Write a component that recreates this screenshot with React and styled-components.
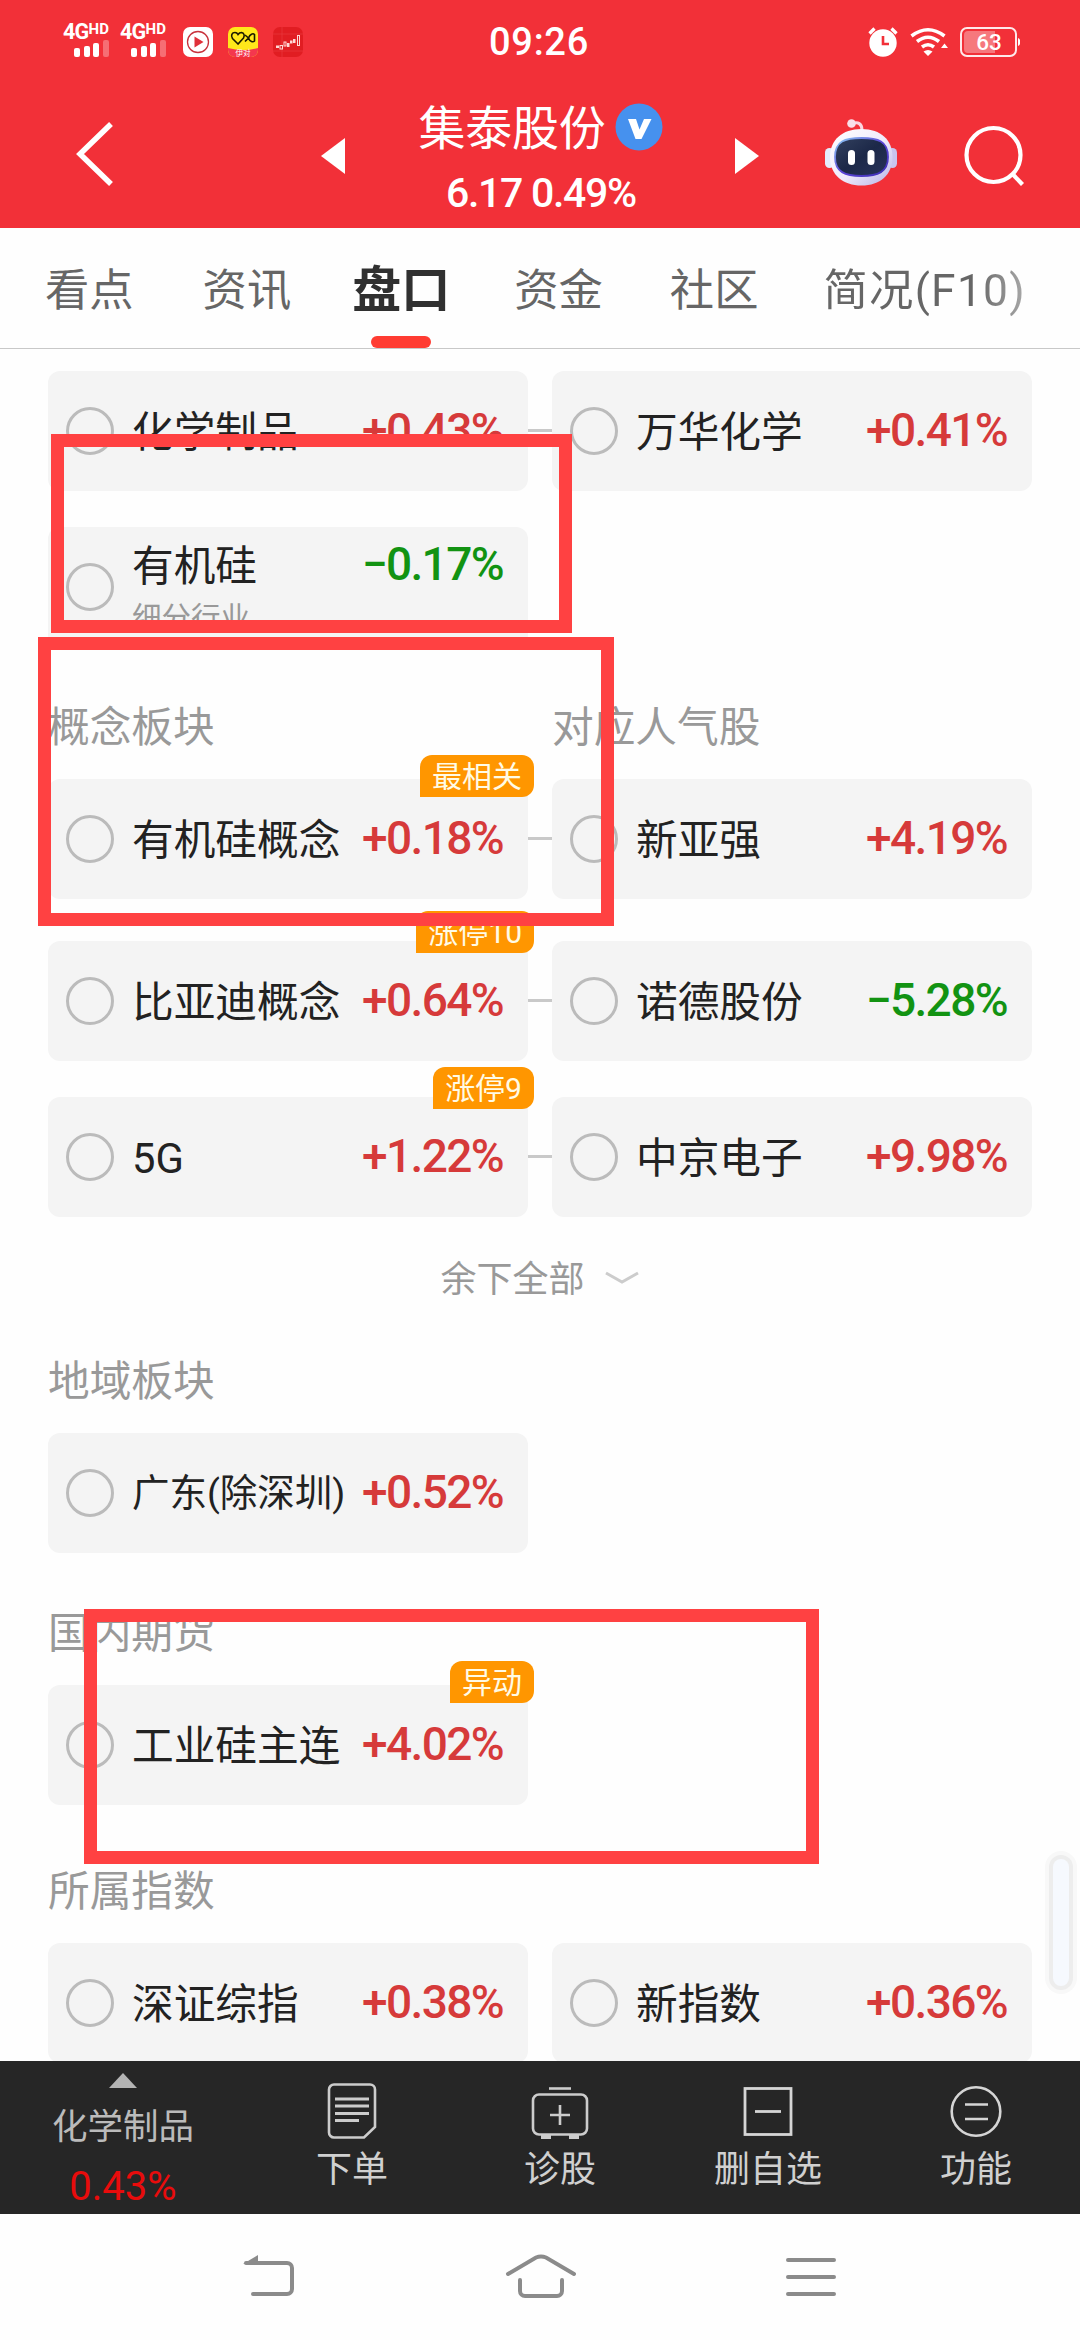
import React, { useState } from 'react'
import styled, { createGlobalStyle } from 'styled-components'

const GlobalStyle = createGlobalStyle`
* { box-sizing: border-box; }
body {
  margin: 0;
  background: #fefefe;
  font-family: Roboto, "Noto Sans CJK SC", sans-serif;
}
svg { display: block; flex: none; }
`

const Screen = styled.div`
position: relative;
display: flex;
flex-direction: column;
width: 1080px;
height: 2340px;
overflow: hidden;
background: #fefefe;
`

const Header = styled.header`
height: 228px;
flex: none;
background: #f23038;
color: #fff;
`

const StatusBar = styled.div`
display: flex;
align-items: center;
height: 84px;
padding: 0 59px 0 63px;
`

const StatusSide = styled.div`
display: flex;
align-items: center;
flex: 1;
gap: ${p => p.gap}px;
justify-content: ${p => p.end ? "flex-end" : "flex-start"};
`

const Clock = styled.div`
margin-left: -6px;
font-size: 38px;
font-weight: 500;
line-height: 44px;
letter-spacing: 0.7px;
`

const SignalBox = styled.div`
display: flex;
flex-direction: column;
align-items: flex-end;
width: 47px;
height: 34px;
margin-top: -4px;
margin-right: ${p => p.last ? 6 : 0}px;
`

const SignalText = styled.div`
display: flex;
align-items: flex-start;
width: 47px;
height: 17px;
font-size: 21.5px;
font-weight: 700;
line-height: 17px;
letter-spacing: -0.8px;
span {
  font-size: 15px;
  line-height: 12px;
  letter-spacing: 0.2px;
}
`

const TitleBar = styled.div`
display: flex;
align-items: center;
height: 144px;
padding: 0 54px 0 75px;
`

const TitleSide = styled.div`
display: flex;
align-items: center;
height: 144px;
padding-bottom: ${p => p.lift || 0}px;
margin-left: ${p => p.left || 0}px;
`

const StockTitle = styled.div`
display: flex;
flex-direction: column;
align-items: center;
width: 390px;
padding: 6px 0 0 2px;
`

const StockName = styled.div`
display: flex;
align-items: center;
height: 58px;
gap: 10px;
font-size: 47px;
line-height: 58px;
letter-spacing: -0.3px;
svg { margin-bottom: 4px; }
`

const StockPrice = styled.div`
height: 60px;
font-size: 41px;
font-weight: 500;
line-height: 71px;
letter-spacing: -1.3px;
`

const TabBar = styled.nav`
display: flex;
height: 121px;
flex: none;
padding-left: 45px;
gap: 66px;
border-bottom: 1px solid #c8c8c8;
background: #fefefe;
`

const Tab = styled.div`
display: flex;
flex-direction: column;
align-items: center;
justify-content: space-between;
padding-top: 30px;
white-space: nowrap;
color: ${p => p.active ? "#303030" : "#666"};
font-size: ${p => p.active ? 49 : 44.3}px;
font-weight: ${p => p.active ? 700 : 400};
line-height: 66px;
margin-left: ${p => p.shift || 0}px;
span {
  ${p => p.fade ? "letter-spacing: 1.3px; background: linear-gradient(90deg, #666 75%, #aaa 100%); -webkit-background-clip: text; color: transparent;" : ""}
}
&::after {
  content: "";
  width: 60px;
  height: 12px;
  border-radius: 6px;
  background: ${p => p.active ? "#ff3c32" : "transparent"};
}
`

const Content = styled.main`
flex: none;
height: 1712px;
overflow: hidden;
padding: 22px 48px 0;
`

const SectionTitle = styled.div`
display: flex;
margin-top: ${p => p.top || 54}px;
margin-bottom: 28px;
color: #999;
font-size: 41.7px;
line-height: 54px;
height: 50px;
white-space: nowrap;
span {
  flex: none;
  width: 504px;
}
`

const Row = styled.div`
display: flex;
align-items: center;
margin-top: ${p => p.top || 0}px;
`

const Link = styled.div`
width: 24px;
height: 3px;
background: #c9c9c9;
margin-top: -1px;
visibility: ${p => p.off ? "hidden" : "visible"};
`

const Card = styled.div`
position: relative;
display: flex;
align-items: center;
width: 480px;
height: 120px;
padding: 0 25px 0 18px;
border-radius: 12px;
background: #f4f4f4;
`

const Circle = styled.div`
width: 48px;
height: 48px;
flex: none;
border: 3px solid #bbb;
border-radius: 50%;
background: ${p => p.checked ? "#f23038" : "transparent"};
`

const CardBody = styled.div`
flex: 1;
margin-left: 18px;
`

const CardLine = styled.div`
display: flex;
align-items: center;
justify-content: space-between;
height: 56px;
white-space: nowrap;
`

const Name = styled.div`
color: #222;
font-size: ${p => p.small ? 37.5 : 41.7}px;
height: 56px;
line-height: ${p => p.small ? 56 : 60}px;
`

const Percent = styled.div`
color: ${p => p.down ? "#129312" : "#d63a3a"};
font-size: 46px;
font-weight: 500;
line-height: 52px;
letter-spacing: -1.6px;
margin-bottom: 3px;
`

const SubLabel = styled.div`
height: 44px;
color: #999;
font-size: 29.5px;
line-height: 50px;
`

const Badge = styled.div`
position: absolute;
right: -6px;
top: ${p => p.top}px;
height: 42px;
padding: 0 12px;
border-radius: 12px 12px 12px 0;
background: #ff9600;
color: #fffbe6;
font-size: 30px;
line-height: 43px;
`

const More = styled.div`
display: flex;
align-items: center;
justify-content: center;
gap: 19px;
height: 84px;
padding-top: 38px;
color: #999;
font-size: 36px;
line-height: 46px;
span {
  padding-top: 3px;
}
`

const ToolBar = styled.footer`
display: flex;
flex: none;
height: 153px;
background: #262626;
color: #d0d0d0;
`

const IndexItem = styled.div`
display: flex;
flex-direction: column;
align-items: center;
width: 246px;
padding-top: 12px;
margin-right: 2px;
color: #bbb;
font-size: 35.5px;
line-height: 50px;
svg { margin-bottom: 14px; }
strong {
  margin-top: 8px;
  color: #e80c0c;
  font-weight: 400;
  font-size: 40px;
  line-height: 54px;
}
`

const Tool = styled.div`
display: flex;
flex-direction: column;
align-items: center;
width: 208px;
padding-top: 20px;
font-size: 36px;
line-height: 50px;
svg { margin-bottom: 6px; }
`

const NavBar = styled.div`
display: flex;
flex: none;
height: 126px;
padding: 38px 240px 0;
justify-content: space-between;
`

const Marker = styled.div`
position: absolute;
left: ${p => p.x}px;
top: ${p => p.y}px;
width: ${p => p.w}px;
height: ${p => p.h}px;
border: 13.5px solid #ff4142;
`

const ScrollThumb = styled.div`
position: absolute;
left: 1053px;
top: 1859px;
width: 16px;
height: 127px;
border-radius: 8px;
background: #f6f9fe;
box-shadow: 0 0 0 4px #ededed, 0 0 0 8px #f8f8f8;
`

function Signal({ last }) {
  return (
    <SignalBox last={last}>
      <SignalText>4G<span>HD</span></SignalText>
      <svg width="36" height="17" viewBox="0 0 36 17" fill="#fff">
        <rect x="0" y="8" width="6" height="9" rx="2" />
        <rect x="10" y="6" width="6" height="11" rx="2" />
        <rect x="19" y="3" width="6" height="14" rx="2" />
        <rect x="29" y="0" width="6" height="17" rx="2" opacity=".3" />
      </svg>
    </SignalBox>
  )
}

function PlayIcon() {
  return (
    <svg width="30" height="30" viewBox="0 0 30 30">
      <rect width="30" height="30" rx="7" fill="#fff" />
      <circle cx="15" cy="15" r="10.5" fill="none" stroke="#c8323c" strokeWidth="1.3" />
      <path d="M11.5 9.5 L20.5 15 L11.5 20.5 Z" fill="#e0303a" />
    </svg>
  )
}

function YiduiIcon() {
  return (
    <svg width="30" height="30" viewBox="0 0 30 30">
      <rect width="30" height="30" rx="7" fill="#ffe81a" />
      <path d="M0 21 Q15 25 30 21 V23 a7 7 0 0 1 -7 7 H7 a7 7 0 0 1 -7 -7 Z" fill="#f4374e" />
      <path d="M10 17 L4.5 11.5 C2.5 8.5 4 5.5 7 5.5 C8.5 5.5 9.5 6.5 10 7.5 C11 6 12 5.5 13.5 5.5 C16 6 17 8.5 15.5 11 Z" fill="none" stroke="#1a1a00" strokeWidth="1.6" />
      <path d="M17 8 L20.500 11 L17 14.500 M20.500 11 C22 7 25 6 26.500 7.500 V14 C25 15.500 22 15 20.500 11" fill="none" stroke="#1a1a00" strokeWidth="1.6" />
      <text x="15" y="28.500" fontSize="7.500" textAnchor="middle" fill="#fff">伊对</text>
    </svg>
  )
}

function KLineIcon() {
  return (
    <svg width="30" height="30" viewBox="0 0 30 30">
      <rect width="30" height="30" rx="7" fill="#e11d22" />
      <path d="M9 0 V30 M0 7 H30 M0 24 H30" stroke="#ea3a3c" strokeWidth=".7" />
      <g stroke="#ffd9d6" strokeWidth="1" fill="none">
        <rect x="7" y="18.500" width="2.500" height="3.500" />
        <rect x="11" y="15" width="2" height="4" />
        <rect x="24.500" y="8.500" width="2" height="10" />
      </g>
      <path d="M3 18.500 h3 v2.500 h-3 Z M14 16 h2.500 v4 h-2.500 Z M17 13.500 h2.500 v3 h-2.500 Z M20 12 h2.500 v4 h-2.500 Z" fill="#ffd9d6" />
    </svg>
  )
}

function AlarmIcon() {
  return (
    <svg width="30" height="30" viewBox="0 0 30 30">
      <circle cx="15" cy="16" r="13.700" fill="#fff" />
      <path d="M1.500 6.500 L6.500 1.500 M28.500 6.500 L23.500 1.500" stroke="#fff" strokeWidth="3.200" />
      <path d="M15 9 V17 H21" fill="none" stroke="#f23038" strokeWidth="2.600" />
    </svg>
  )
}

function WifiIcon() {
  return (
    <svg width="38" height="30" viewBox="0 0 38 30">
      <g fill="none" stroke="#fff" strokeWidth="3.600">
        <path d="M1.500 9 Q18 -3.500 34.500 9" />
        <path d="M7 14.500 Q18 6 29 14.500" />
        <path d="M12 20 Q18 15.500 24 20" />
      </g>
      <path d="M13.500 24.500 Q18 21.500 22.500 24.500 L18 29 Z M31 21 L34.500 16.500 L38 21 Z" fill="#fff" />
    </svg>
  )
}

function BatteryIcon() {
  return (
    <svg width="61" height="30" viewBox="0 0 61 30">
      <rect x="1" y="1" width="55" height="28" rx="6" fill="none" stroke="#fff" strokeOpacity=".9" strokeWidth="2" />
      <path d="M8 4 H35 V26 H8 a4 4 0 0 1 -4 -4 V8 a4 4 0 0 1 4 -4 Z" fill="#fff" opacity=".35" />
      <path d="M58 11 a3 3 0 0 1 2 2 v4 a3 3 0 0 1 -2 2 Z" fill="#fff" />
      <text x="29" y="23" fontSize="22.500" fontWeight="500" textAnchor="middle" fill="#fff">63</text>
    </svg>
  )
}

function RobotIcon() {
  return (
    <svg width="72" height="68" viewBox="0 0 72 68">
      <defs>
        <linearGradient id="shell" x1="0" y1="0" x2="1" y2="1">
          <stop offset="0" stopColor="#fff" />
          <stop offset=".55" stopColor="#efeafb" />
          <stop offset="1" stopColor="#b5b2e6" />
        </linearGradient>
        <linearGradient id="face" x1="0" y1="0" x2="1" y2="1">
          <stop offset="0" stopColor="#33415f" />
          <stop offset=".5" stopColor="#1c2848" />
          <stop offset="1" stopColor="#28325a" />
        </linearGradient>
        <linearGradient id="rim" x1="0" y1="0" x2="1" y2="1">
          <stop offset="0" stopColor="#8fd0f4" />
          <stop offset=".5" stopColor="#5c46d8" />
          <stop offset="1" stopColor="#3b2cb0" />
        </linearGradient>
      </defs>
      <path d="M27 5 C33 2 37 5 37 11" fill="none" stroke="#fbd5e0" strokeWidth="3" />
      <circle cx="26.500" cy="4.500" r="4.300" fill="#f9dfe9" />
      <rect x="0" y="29" width="9" height="20" rx="4.500" fill="#e4ecfc" />
      <rect x="63" y="29" width="9" height="20" rx="4.500" fill="#c9c4ee" />
      <path d="M36.500 10 C56 10 67.500 21 67.500 38 C67.500 56 55 66.500 36.500 66.500 C18 66.500 5 56 5 38 C5 21 17 10 36.500 10 Z" fill="url(#shell)" />
      <path d="M36.500 19 C53 19 63 22 63 38 C63 53 53 57 36.500 57 C20 57 10 53 10 38 C10 22 20 19 36.500 19 Z" fill="url(#face)" stroke="url(#rim)" strokeWidth="1.800" />
      <rect x="23" y="31" width="7" height="15" rx="3.500" fill="#fff" />
      <rect x="42.500" y="31" width="7" height="15" rx="3.500" fill="#fff" />
    </svg>
  )
}

const BackIcon = () => (
  <svg width="40" height="66" viewBox="0 0 40 66">
    <path d="M36 3 L5 33 L36 63" fill="none" stroke="#fff" strokeWidth="5.500" />
  </svg>
)

const PrevIcon = () => (
  <svg width="24" height="36" viewBox="0 0 24 36"><path d="M24 0 V36 L0 18 Z" fill="#fff" /></svg>
)

const NextIcon = () => (
  <svg width="24" height="36" viewBox="0 0 24 36"><path d="M0 0 V36 L24 18 Z" fill="#fff" /></svg>
)

const VIcon = () => (
  <svg width="48" height="48" viewBox="0 0 48 48">
    <circle cx="24" cy="24" r="23.500" fill="#4691ee" />
    <path d="M13 16 H21 L24.500 26.500 L29 16 H36.500 L26.500 36 H20.500 Z" fill="#fff" />
  </svg>
)

const SearchIcon = () => (
  <svg width="62" height="62" viewBox="0 0 62 62">
    <circle cx="29.500" cy="30" r="27" fill="none" stroke="#fff" strokeWidth="4.200" />
    <path d="M48.500 49 L58.500 59.500" stroke="#fff" strokeWidth="4.200" />
  </svg>
)

const ArrowDown = () => (
  <svg width="36" height="14" viewBox="0 0 36 14">
    <path d="M2 2 L18 11 L34 2" fill="none" stroke="#ccc" strokeWidth="3" />
  </svg>
)

const OrderIcon = () => (
  <svg width="50" height="58" viewBox="0 0 50 58" fill="none" stroke="#ccc" strokeWidth="2.600">
    <path d="M7 3.500 H43 a5 5 0 0 1 5 5 V46 L37 56.500 H7 a5 5 0 0 1 -5 -5 V8.500 a5 5 0 0 1 5 -5 Z" />
    <path d="M8 18 H42 M8 25 H42 M8 32.500 H42 M8 39.500 H32" strokeWidth="3" />
  </svg>
)

const DiagnoseIcon = () => (
  <svg width="58" height="58" viewBox="0 0 58 58" fill="none" stroke="#ccc" strokeWidth="2.600">
    <rect x="2" y="13.500" width="54" height="40" rx="6" />
    <path d="M18 7.500 H40" />
    <path d="M29 24 V44 M19 34 H39" />
    <path d="M10 56 H20 M38 56 H48" strokeWidth="4" />
  </svg>
)

const RemoveIcon = () => (
  <svg width="50" height="58" viewBox="0 0 50 58" fill="none" stroke="#d5d5d5" strokeWidth="2.800">
    <rect x="2" y="7.500" width="46" height="46" />
    <path d="M12 30.500 H38" />
  </svg>
)

const MenuIcon = () => (
  <svg width="52" height="58" viewBox="0 0 52 58" fill="none" stroke="#d5d5d5" strokeWidth="2.600">
    <circle cx="26" cy="30.500" r="24.300" />
    <path d="M15 23.500 H38 M15 38 H38" />
  </svg>
)

const sections = [
  {
    rows: [
      { left: { name: "化学制品", pct: "+0.43%" }, right: { name: "万华化学", pct: "+0.41%" } },
      { top: 36, left: { name: "有机硅", pct: "−0.17%", sub: "细分行业" } },
    ],
  },
  {
    title: "概念板块",
    title2: "对应人气股",
    more: true,
    rows: [
      { left: { name: "有机硅概念", pct: "+0.18%", badge: "最相关", badgeTop: -24 }, right: { name: "新亚强", pct: "+4.19%" } },
      { top: 42, left: { name: "比亚迪概念", pct: "+0.64%", badge: "涨停10", badgeTop: -30 }, right: { name: "诺德股份", pct: "−5.28%" } },
      { top: 36, left: { name: "5G", pct: "+1.22%", badge: "涨停9", badgeTop: -30 }, right: { name: "中京电子", pct: "+9.98%" } },
    ],
  },
  {
    title: "地域板块",
    rows: [{ left: { name: "广东(除深圳)", pct: "+0.52%", small: true } }],
  },
  {
    title: "国内期货",
    rows: [{ left: { name: "工业硅主连", pct: "+4.02%", badge: "异动", badgeTop: -24 } }],
  },
  {
    title: "所属指数",
    top: 60,
    noLink: true,
    rows: [{ left: { name: "深证综指", pct: "+0.38%" }, right: { name: "新指数", pct: "+0.36%" } }],
  },
]

const tabs = [
  { name: "看点" },
  { name: "资讯", shift: 3 },
  { name: "盘口", shift: -5 },
  { name: "资金", shift: -2 },
  { name: "社区", shift: 1 },
  { name: "简况(F10)", shift: -1, fade: true },
]

// red frames drawn over the list
const markers = [
  { x: 51, y: 434, w: 521, h: 198.5 },
  { x: 38, y: 637, w: 576, h: 289 },
  { x: 83.5, y: 1609, w: 735.5, h: 255 },
]

function StockCard({ item, checked, onToggle }) {
  return (
    <Card onClick={onToggle}>
      <Circle checked={checked} />
      <CardBody>
        <CardLine>
          <Name small={item.small}>{item.name}</Name>
          <Percent down={item.pct.startsWith("−")}>{item.pct}</Percent>
        </CardLine>
        {item.sub ? <SubLabel>{item.sub}</SubLabel> : null}
      </CardBody>
      {item.badge ? <Badge top={item.badgeTop}>{item.badge}</Badge> : null}
    </Card>
  )
}

export default function App() {
  const [activeTab, setActiveTab] = useState("盘口")
  const [checked, setChecked] = useState({})

  function toggle(name) {
    setChecked({ ...checked, [name]: !checked[name] })
  }

  return (
    <Screen>
      <GlobalStyle />
      <Header>
        <StatusBar>
          <StatusSide gap={10}>
            <Signal />
            <Signal last />
            <StatusSide gap={15}>
              <PlayIcon />
              <YiduiIcon />
              <KLineIcon />
            </StatusSide>
          </StatusSide>
          <Clock>09:26</Clock>
          <StatusSide gap={12} end>
            <AlarmIcon />
            <WifiIcon />
            <BatteryIcon />
          </StatusSide>
        </StatusBar>
        <TitleBar>
          <TitleSide lift={5}><BackIcon /></TitleSide>
          <TitleSide left={206}><PrevIcon /></TitleSide>
          <StockTitle>
            <StockName>集泰股份<VIcon /></StockName>
            <StockPrice>6.17 0.49%</StockPrice>
          </StockTitle>
          <TitleSide><NextIcon /></TitleSide>
          <TitleSide left={66} lift={6}><RobotIcon /></TitleSide>
          <TitleSide left={67}><SearchIcon /></TitleSide>
        </TitleBar>
      </Header>
      <TabBar>
        {tabs.map((tab) => (
          <Tab key={tab.name} active={tab.name === activeTab} shift={tab.shift} fade={tab.fade} onClick={() => setActiveTab(tab.name)}>
            <span>{tab.name}</span>
          </Tab>
        ))}
      </TabBar>
      <Content>
        {sections.map((section, i) => (
          <section key={i}>
            {section.title ? (
              <SectionTitle top={section.top}>
                <span>{section.title}</span>
                {section.title2 ? <span>{section.title2}</span> : null}
              </SectionTitle>
            ) : null}
            {section.rows.map(({ top, left, right }) => (
              <Row key={left.name} top={top}>
                <StockCard item={left} checked={checked[left.name]} onToggle={() => toggle(left.name)} />
                {right ? <Link off={section.noLink} /> : null}
                {right ? <StockCard item={right} checked={checked[right.name]} onToggle={() => toggle(right.name)} /> : null}
              </Row>
            ))}
            {section.more ? <More><span>余下全部</span><ArrowDown /></More> : null}
          </section>
        ))}
      </Content>
      <ToolBar>
        <IndexItem>
          <svg width="28" height="15" viewBox="0 0 28 15"><path d="M14 0 L28 15 H0 Z" fill="#b3b3b3" /></svg>
          化学制品
          <strong>0.43%</strong>
        </IndexItem>
        <Tool><OrderIcon />下单</Tool>
        <Tool><DiagnoseIcon />诊股</Tool>
        <Tool><RemoveIcon />删自选</Tool>
        <Tool><MenuIcon />功能</Tool>
      </ToolBar>
      <NavBar>
        <svg width="58" height="48" viewBox="0 0 58 48" fill="none" stroke="#8b8b8b" strokeWidth="4" strokeLinecap="round">
          <path d="M6 11 H47 a5 5 0 0 1 5 5 V37 a5 5 0 0 1 -5 5 H13" />
          <path d="M3 12 L18 3 V12 Z" fill="#8b8b8b" stroke="none" />
        </svg>
        <svg width="74" height="48" viewBox="0 0 74 48" fill="none" stroke="#8b8b8b" strokeWidth="4" strokeLinecap="round">
          <path d="M5 22 L33 5.500 Q38 3.500 43 5.500 L71 22" />
          <path d="M17 28 V39 a5 5 0 0 0 5 5 H54 a5 5 0 0 0 5 -5 V28" />
        </svg>
        <svg width="58" height="48" viewBox="0 0 58 48" fill="none" stroke="#8b8b8b" strokeWidth="4" strokeLinecap="round">
          <path d="M6 8 H52 M6 25 H52 M6 42 H52" />
        </svg>
      </NavBar>
      <ScrollThumb />
      {markers.map((m, i) => <Marker key={i} {...m} />)}
    </Screen>
  )
}
